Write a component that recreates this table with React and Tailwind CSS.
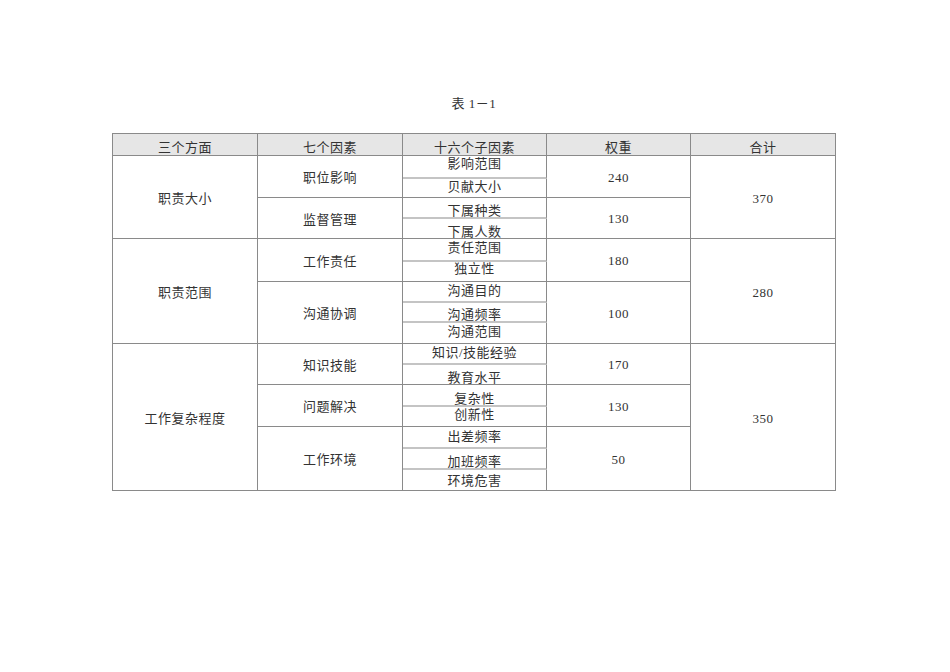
const HEADERS = ["三个方面", "七个因素", "十六个子因素", "权重", "合计"];

// three aspects -> factors -> sub factors
const ASPECTS = [
  {
    name: "职责大小",
    total: "370",
    span: "row-span-4",
    factors: [
      {
        name: "职位影响",
        weight: "240",
        span: "row-span-2",
        subs: [
          { text: "影响范围", pad: "pt-[1px]" },
          { text: "贝献大小", pad: "pt-[1px]" },
        ],
      },
      {
        name: "监督管理",
        weight: "130",
        span: "row-span-2",
        subs: [
          { text: "下属种类", pad: "pt-[6px]" },
          { text: "下属人数", pad: "pt-[6px]" },
        ],
      },
    ],
  },
  {
    name: "职责范围",
    total: "280",
    span: "row-span-5",
    factors: [
      {
        name: "工作责任",
        weight: "180",
        span: "row-span-2",
        subs: [
          { text: "责任范围", pad: "pt-[2px]" },
          { text: "独立性", pad: "pt-0" },
        ],
      },
      {
        name: "沟通协调",
        weight: "100",
        span: "row-span-3",
        subs: [
          { text: "沟通目的", pad: "pt-[2px]" },
          { text: "沟通频率", pad: "pt-[5px]" },
          { text: "沟通范围", pad: "pt-[2px]" },
        ],
      },
    ],
  },
  {
    name: "工作复杂程度",
    total: "350",
    span: "row-span-7",
    factors: [
      {
        name: "知识技能",
        weight: "170",
        span: "row-span-2",
        subs: [
          { text: "知识/技能经验", pad: "pt-[2px]" },
          { text: "教育水平", pad: "pt-[6px]" },
        ],
      },
      {
        name: "问题解决",
        weight: "130",
        span: "row-span-2",
        subs: [
          { text: "复杂性", pad: "pt-[7px]" },
          { text: "创新性", pad: "pt-[1px]" },
        ],
      },
      {
        name: "工作环境",
        weight: "50",
        span: "row-span-3",
        subs: [
          { text: "出差频率", pad: "pt-[3px]" },
          { text: "加班频率", pad: "pt-[6px]" },
          { text: "环境危害", pad: "pt-[4px]" },
        ],
      },
    ],
  },
];

const cell = "border-r border-b border-[#8a8a8a] flex justify-center";

export default function App() {
  const cells = [];

  ASPECTS.forEach((aspect, ai) => {
    aspect.factors.forEach((factor, fi) => {
      factor.subs.forEach((sub, si) => {
        if (fi === 0 && si === 0) {
          cells.push(
            <div key={`a${ai}`} className={`${cell} ${aspect.span} items-center pt-[3px]`}>
              {aspect.name}
            </div>
          );
        }
        if (si === 0) {
          cells.push(
            <div key={`f${ai}${fi}`} className={`${cell} ${factor.span} items-center pt-[3px]`}>
              {factor.name}
            </div>
          );
        }
        const lastInFactor = si === factor.subs.length - 1;
        cells.push(
          <div
            key={`s${ai}${fi}${si}`}
            className={`border-r border-[#8a8a8a] flex justify-center items-start ${sub.pad} ${
              lastInFactor ? "border-b" : "border-b-2 border-b-[#c4c4c4]"
            }`}
          >
            {sub.text}
          </div>
        );
        if (si === 0) {
          cells.push(
            <div key={`w${ai}${fi}`} className={`${cell} ${factor.span} items-center pt-[2px]`}>
              {factor.weight}
            </div>
          );
        }
        if (fi === 0 && si === 0) {
          cells.push(
            <div key={`t${ai}`} className={`${cell} ${aspect.span} items-center pt-[3px]`}>
              {aspect.total}
            </div>
          );
        }
      });
    });
  });

  return (
    <div className="w-[950px] h-[672px] bg-white pl-[112px] pt-[97px] font-['Liberation_Serif','Noto_Sans_CJK_SC',serif] text-[13px] leading-[14px] text-[#333]">
      <p className="w-[724px] text-center tracking-[0.5px]">表 1－1</p>

      <div className="mt-[22px] w-[724px] grid grid-cols-[145px_145px_144px_144px_145px] grid-rows-[22px_23px_19px_21px_20px_23px_20px_21px_20px_21px_21px_20px_22px_20px_22px_21px_21px] border-l border-t border-[#8a8a8a] tracking-[0.5px]">
        {HEADERS.map((h) => (
          <div key={h} className={`${cell} items-start pt-[7px] bg-[#e6e6e6]`}>
            {h}
          </div>
        ))}
        {cells}
      </div>
    </div>
  );
}
